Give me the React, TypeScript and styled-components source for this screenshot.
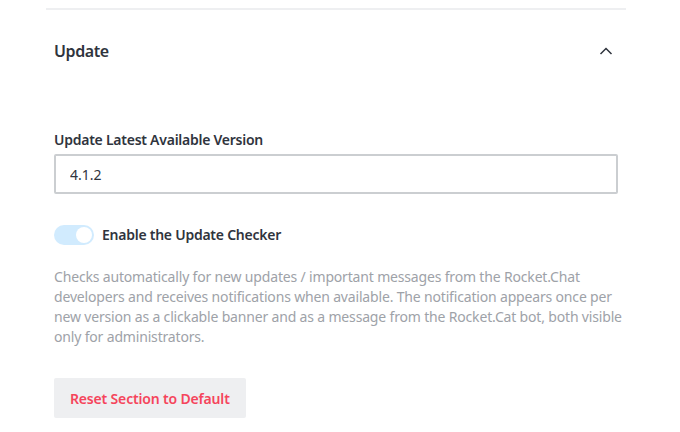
import React from "react";
import styled, { createGlobalStyle } from "styled-components";

const Global = createGlobalStyle`
  html, body { margin: 0; padding: 0; background: #ffffff; }
  body { font-family: "Noto Sans", "Open Sans", sans-serif; -webkit-font-smoothing: antialiased; }
  * { box-sizing: border-box; }
`;

const Page = styled.div`
  width: 680px;
  height: 432px;
  overflow: hidden;
  padding: 8px 54px 0 46px;
`;

const Divider = styled.div`
  height: 2px;
  width: 580px;
  background: #eeeff1;
`;

const Section = styled.section`
  padding-left: 8px;
  width: 580px;
`;

const Header = styled.div`
  display: flex;
  align-items: center;
  justify-content: space-between;
  height: 82px;
  width: 560px;
`;

const Title = styled.h2`
  margin: 0;
  font-size: 16px;
  line-height: 24px;
  font-weight: 600;
  letter-spacing: -0.4px;
  color: #2f343d;
`;

const Body = styled.div`
  display: flex;
  flex-direction: column;
  padding-top: 38px;
`;

const Label = styled.label`
  display: block;
  font-size: 14px;
  line-height: 20px;
  font-weight: 600;
  letter-spacing: -0.25px;
  color: #2f343d;
`;

const Input = styled.input`
  margin-top: 4px;
  width: 564px;
  height: 40px;
  border: 2px solid #cbced1;
  border-radius: 2px;
  padding: 0 14px;
  font-family: inherit;
  font-size: 14px;
  color: #2f343d;
  outline: none;
  background: #fff;
`;

const ToggleRow = styled.div`
  display: flex;
  align-items: center;
  gap: 8px;
  margin-top: 31px;
`;

const Track = styled.span<{ $on: boolean }>`
  position: relative;
  display: inline-block;
  width: 40px;
  height: 20px;
  border-radius: 10px;
  background: ${(p) => (p.$on ? "#d1ebfe" : "#cbced1")};
`;

const Knob = styled.span<{ $on: boolean }>`
  position: absolute;
  top: 2px;
  left: ${(p) => (p.$on ? "22px" : "2px")};
  width: 16px;
  height: 16px;
  border-radius: 50%;
  background: #ffffff;
`;

const Hint = styled.p`
  margin: 22px 0 0;
  font-size: 14px;
  line-height: 20px;
  letter-spacing: -0.17px;
  color: #9ea2a8;
  width: 576px;
`;

const ResetButton = styled.button`
  margin-top: 31px;
  align-self: flex-start;
  height: 40px;
  padding: 0 16px;
  border: none;
  border-radius: 2px;
  background: #eeeff1;
  color: #f5455c;
  font-family: inherit;
  font-size: 14px;
  font-weight: 600;
  letter-spacing: -0.17px;
  cursor: pointer;
`;

const Chevron = () => (
  <svg width="16" height="16" viewBox="0 0 16 16" fill="none">
    <path d="M2.5 11 L8 5.5 L13.5 11" stroke="#2f343d" strokeWidth="1.5" />
  </svg>
);

export default function App() {
  return (
    <>
      <Global />
      <Page>
        <Divider />
        <Section>
          <Header>
            <Title>Update</Title>
            <Chevron />
          </Header>
          <Body>
            <Label htmlFor="ver">Update Latest Available Version</Label>
            <Input id="ver" defaultValue="4.1.2" />
            <ToggleRow>
              <Track $on>
                <Knob $on />
              </Track>
              <Label as="span">Enable the Update Checker</Label>
            </ToggleRow>
            <Hint>
              Checks automatically for new updates / important messages from the Rocket.Chat
              developers and receives notifications when available. The notification appears once per
              new version as a clickable banner and as a message from the Rocket.Cat bot, both visible
              only for administrators.
            </Hint>
            <ResetButton>Reset Section to Default</ResetButton>
          </Body>
        </Section>
      </Page>
    </>
  );
}
